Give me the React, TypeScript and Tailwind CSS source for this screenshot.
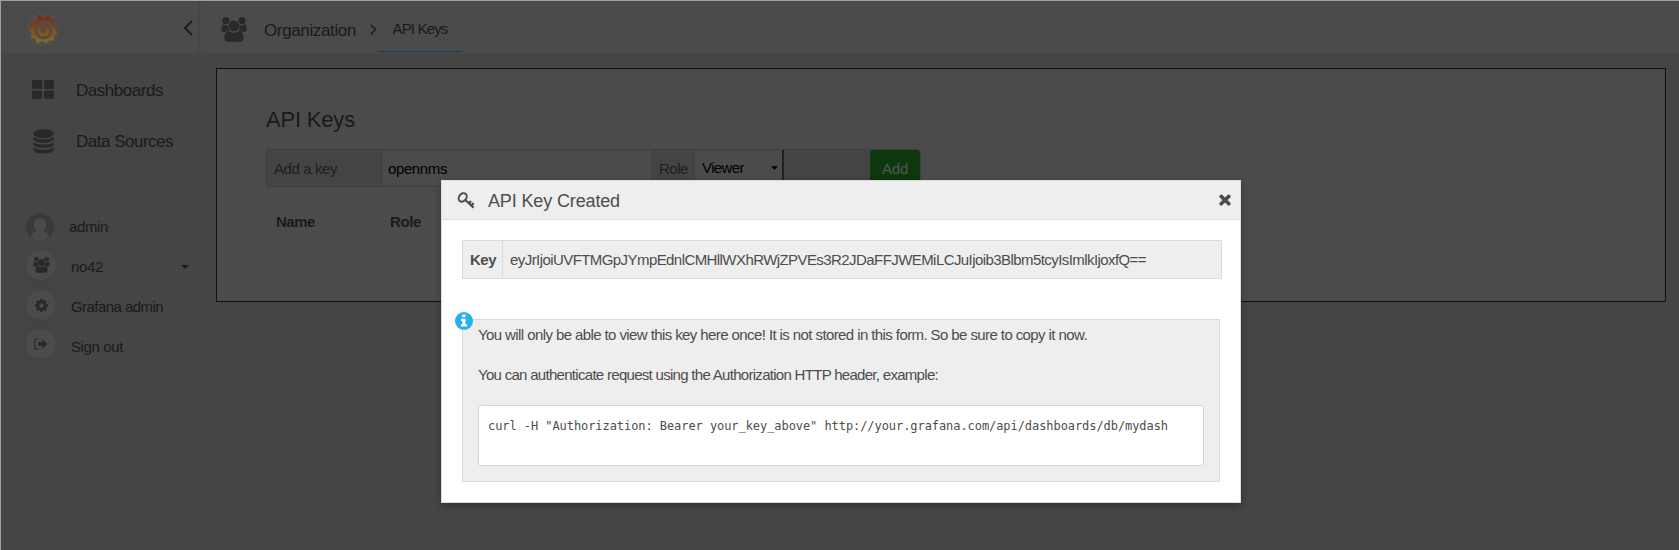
import React from "react";

type IconProps = { className?: string };

const UsersIcon = ({ className }: IconProps) => (
  <svg viewBox="0 0 26 25" className={className} fill="currentColor">
    <circle cx="4.9" cy="3.6" r="3.6" />
    <circle cx="21" cy="3.6" r="3.6" />
    <path d="M0.2 12.6C0.2 9 1.2 7.5 2.8 7.4C4.8 8.8 6.2 8.6 7.2 8.4C6.9 10.8 7.5 12 8.6 13.2C6.5 13.3 5.4 14 4.6 14.9H2.6C1 14.9 0.2 14.2 0.2 12.6ZM25.8 12.6C25.8 9 24.8 7.5 23.2 7.4C21.2 8.8 19.8 8.6 18.8 8.4C19.1 10.8 18.5 12 17.4 13.2C19.5 13.3 20.6 14 21.4 14.9H23.4C25 14.9 25.8 14.2 25.8 12.6Z" />
    <circle cx="13" cy="9" r="5.4" />
    <path d="M3.4 20.6C3.4 16.6 5 14 8.2 14C9.8 15.4 11.4 15.8 13 15.8C14.6 15.8 16.2 15.4 17.8 14C21 14 22.6 16.6 22.6 20.6C22.6 23.4 21 24.8 18.6 24.8H7.4C5 24.8 3.4 23.4 3.4 20.6Z" />
  </svg>
);

const GridIcon = () => (
  <svg viewBox="0 0 22 19" className="-mt-[2px] h-[19px] w-[22px]" fill="currentColor">
    <rect x="0" y="0" width="10.2" height="9" rx="1.6" />
    <rect x="12" y="0" width="10" height="9" rx="1.6" />
    <rect x="0" y="10.4" width="10.2" height="8.6" rx="1.6" />
    <rect x="12" y="10.4" width="10" height="8.6" rx="1.6" />
  </svg>
);

const DatabaseIcon = () => (
  <svg viewBox="0 0 21 25" className="h-[25px] w-[21px]" fill="currentColor">
    <ellipse cx="10.5" cy="4.6" rx="10.3" ry="4.4" />
    <path d="M.2 8C4.5 11.2 16.5 11.2 20.8 8V10.2C20 14.8 1 14.8 .2 10.2Z" />
    <path d="M.2 13.2C4.5 16.4 16.5 16.4 20.8 13.2V15.4C20 20 1 20 .2 15.4Z" />
    <path d="M.2 18.4C4.5 21.6 16.5 21.6 20.8 18.4V20.4C20 26 1 26 .2 20.4Z" />
  </svg>
);

const Logo = () => (
  <svg viewBox="0 0 40 40" className="mt-[4px] h-10 w-10">
    <defs>
      <linearGradient id="flame" x1="0" y1="0" x2="0" y2="1">
        <stop offset="0" stopColor="#7c2415" />
        <stop offset="0.5" stopColor="#86481c" />
        <stop offset="1" stopColor="#85701f" />
      </linearGradient>
    </defs>
    <circle cx="20" cy="20" r="19" fill="#4d4d4d" stroke="#484848" />
    <path
      fill="url(#flame)"
      d="M15.2 5.8L19.3 8.6L22.2 8.5L25.8 5.9L27.4 9.6C31.2 11.4 33.6 14.6 34.4 18.4L32.6 19.6L34.3 23.8L31 26.2L31.2 31.6L26.4 31.5L23.2 34.5L19.6 32.3L13.6 34.2L12.6 29.8L7.6 28.8L9 24.4L6 21.4L9.3 18.4L7 13.4L12 12.6L13.3 11.6Z"
    />
    <path
      fill="none"
      stroke="#4d4d4d"
      strokeWidth="2.8"
      strokeLinecap="round"
      d="M35.500 21.500C31.800 15.500 27 12.900 22 12.900C16.500 12.900 13 16.800 13 21.300C13 26 16.500 29 20.500 29C25 29 27.800 25.800 27.800 22.400C27.800 19.300 25.200 17.400 22.800 17.400C20.200 17.400 18.600 19.200 18.900 21.200C19.100 22.600 20.400 23.200 21.400 22.700"
    />
  </svg>
);

const ChevronIcon = ({ className }: IconProps) => (
  <svg viewBox="0 0 10 16" className={className} fill="none" stroke="currentColor" strokeWidth="2">
    <path d="M9 1L2 8L9 15" />
  </svg>
);

const KeyIcon = () => (
  <svg viewBox="0 0 18 17" className="h-[17px] w-[18px]" fill="none" stroke="currentColor">
    <ellipse cx="5.7" cy="5.4" rx="3.6" ry="4.6" transform="rotate(40 5.7 5.4)" strokeWidth="2" />
    <path d="M8.6 8.2L16.6 15.6M11.9 11.400L14 9M14.200 13.600L16.600 11" strokeWidth="2.2" />
  </svg>
);

const CloseIcon = () => (
  <svg viewBox="0 0 12 12" className="h-3 w-3" stroke="currentColor" strokeWidth="3.6" strokeLinecap="round">
    <path d="M2.2 2.4L9.8 9.8M9.8 2.4L2.2 9.8" />
  </svg>
);

const GearIcon = () => (
  <svg viewBox="0 0 1536 1536" className="h-[13px] w-[13px]" fill="currentColor">
    <path d="M1024 768q0-106-75-181t-181-75-181 75-75 181 75 181 181 75 181-75 75-181zm512-109v222q0 12-8 23t-20 13l-185 28q-19 54-39 91 35 50 107 138 10 12 10 25t-9 23q-27 37-99 108t-94 71q-12 0-26-9l-138-108q-44 23-91 38-16 136-29 186-7 28-36 28H657q-14 0-24.500-8.500T621 1506l-28-184q-49-16-90-37l-141 107q-10 9-25 9-14 0-25-11-126-114-165-168-7-10-7-23 0-12 8-23 15-21 51-66.500t54-70.500q-27-50-41-99L29 913q-13-2-21-12.500T0 877V655q0-12 8-23t19-13l186-28q14-46 39-92-40-57-107-138-10-12-10-24 0-10 9-23 26-36 98.500-107.500T337 135q13 0 26 10l138 107q44-23 91-38 16-136 29-186 7-28 36-28h222q14 0 24.500 8.500T915 30l28 184q49 16 90 37l142-107q9-9 24-9 13 0 25 10 129 119 165 170 7 8 7 22 0 12-8 23-15 21-51 66.500t-54 70.500q26 50 41 98l183 28q13 2 21 12.500t8 23.500z" />
  </svg>
);

const SignOutIcon = () => (
  <svg viewBox="0 0 14 12" className="h-3 w-[14px]" fill="none">
    <path d="M5 1H2.700Q.8 1 .8 3V9Q.8 11 2.700 11H5" stroke="currentColor" strokeWidth="1.100" />
    <path d="M4.300 4H8.300V1L13.600 6L8.300 11V8H4.300Z" fill="currentColor" />
  </svg>
);

const InfoIcon = () => (
  <svg viewBox="0 0 18 18" className="h-[18px] w-[18px]">
    <circle cx="9" cy="9" r="9" fill="#29b2e8" />
    <path fill="#fff" d="M7.300 2.600H10.500V5.200H7.300ZM6 6.700H10.500V12.300H12V14.400H6V12.300H7.400V8.700H6Z" />
  </svg>
);

const Avatar = () => (
  <svg viewBox="0 0 28 28" className="h-7 w-7">
    <clipPath id="round">
      <circle cx="14" cy="14" r="14" />
    </clipPath>
    <g clipPath="url(#round)">
      <rect width="28" height="28" fill="#3a3a3a" />
      <ellipse cx="14" cy="11.500" rx="6.300" ry="6.700" fill="#4a4a4a" />
      <ellipse cx="14" cy="25" rx="9.300" ry="7.700" fill="#4a4a4a" />
    </g>
  </svg>
);

const Disc = ({ children }: { children: React.ReactNode }) => (
  <span className="flex h-[30px] w-[30px] items-center justify-center rounded-full bg-[#4b4b4b] text-[#292929] shadow-[0_0_14px_2px_rgba(0,0,0,0.030)]">
    {children}
  </span>
);

const Caret = ({ className }: IconProps) => (
  <svg viewBox="0 0 8 4" className={className} fill="currentColor">
    <path d="M0 0H8L4 4Z" />
  </svg>
);

/** Text run set to a fixed advance width. */
const Fit = ({ w, children, className = "" }: { w: number; children: string; className?: string }) => {
  const ref = React.useRef<HTMLSpanElement>(null);
  const [spacing, setSpacing] = React.useState(0);
  React.useLayoutEffect(() => {
    if (ref.current) setSpacing((w - ref.current.getBoundingClientRect().width) / children.length);
  }, [w, children]);
  return (
    <span ref={ref} className={"inline-block whitespace-nowrap " + className} style={{ letterSpacing: spacing }}>
      {children}
    </span>
  );
};

const Sidebar = () => (
  <aside className="flex w-[197px] shrink-0 flex-col text-[#1a1a1a]">
    <div className="flex h-[52px] items-center justify-between bg-[#4b4b4b] pr-[5px] pl-[22px]">
      <Logo />
      <ChevronIcon className="mt-[2px] h-4 w-[10px] text-[#1c1c1c]" />
    </div>
    <nav className="flex flex-col pt-[12px] text-[17px]">
      <div className="flex h-[51px] items-center pl-[31px]">
        <span className="flex w-[44px] text-[#292929]"><GridIcon /></span>
        <Fit w={87}>Dashboards</Fit>
      </div>
      <div className="flex h-[51px] items-center pl-[32px]">
        <span className="flex w-[43px] text-[#292929]"><DatabaseIcon /></span>
        <Fit w={97}>Data Sources</Fit>
      </div>
    </nav>
    <div className="flex flex-col pt-[40px] text-[15px]">
      <div className="flex h-[40px] items-center pl-[25px]">
        <span className="w-[43px]"><Avatar /></span>
        <Fit w={39}>admin</Fit>
      </div>
      <div className="flex h-[40px] items-center pr-[9px] pl-[25px]">
        <span className="-mt-[4px] w-[45px]"><Disc><UsersIcon className="h-4 w-[17px]" /></Disc></span>
        <Fit w={32}>no42</Fit>
        <Caret className="ml-auto h-1 w-2" />
      </div>
      <div className="flex h-[40px] items-center pl-[25px]">
        <span className="-mt-[4px] w-[45px]"><Disc><GearIcon /></Disc></span>
        <Fit w={92}>Grafana admin</Fit>
      </div>
      <div className="flex h-[40px] items-center pl-[25px]">
        <span className="-mt-[6px] w-[45px]"><Disc><SignOutIcon /></Disc></span>
        <Fit w={52}>Sign out</Fit>
      </div>
    </div>
  </aside>
);

const Topbar = () => (
  <header className="flex h-[52px] shrink-0 items-center border-l-2 border-[#484848] bg-[#4b4b4b] pl-[20px] text-[#1a1a1a]">
    <UsersIcon className="mt-[5px] h-[25px] w-[26px] text-[#292929]" />
    <Fit w={92} className="ml-[17px] pt-[7px] text-[17px]">Organization</Fit>
    <ChevronIcon className="mt-[4px] ml-[14px] h-[11px] w-[7px] rotate-180" />
    <div className="ml-px flex h-[51px] w-[84px] items-center justify-center self-start border-b border-[#124257] pt-[6px] text-[15px]">
      <Fit w={55}>API Keys</Fit>
    </div>
  </header>
);

const KeysPanel = () => (
  <section className="mt-[15px] mr-[13px] ml-[16px] h-[234px] border border-[#101010] bg-[#4b4b4b] pt-[34px] pl-[49px] text-[#1a1a1a]">
    <h1 className="h-[46px] text-[22px] leading-[34px]"><Fit w={89}>API Keys</Fit></h1>
    <div className="flex h-[38px] w-[655px] border border-[#404040] bg-[#444444] text-[15px] leading-[38px]">
      <div className="w-[115px] border-r border-[#404040] pl-[7px] text-[#1e1e1e]"><Fit w={63}>Add a key</Fit></div>
      <div className="w-[270px] border-r border-[#404040] bg-[#4b4b4b] pl-[6px] text-black"><Fit w={59}>opennms</Fit></div>
      <div className="w-[43px] border-r border-[#404040] pl-[7px] text-[#1e1e1e]"><Fit w={29}>Role</Fit></div>
      <div className="flex w-[89px] items-center border-r-2 border-[#222222] bg-[#4b4b4b] pr-[4px] pl-[7px] text-black">
        <Fit w={42}>Viewer</Fit>
        <Caret className="ml-auto h-1 w-[7px]" />
      </div>
      <button className="ml-auto flex h-[36px] w-[50px] items-center justify-center rounded-[3px] bg-[#0d380e] pt-[2px] text-[15px] text-[#555555]">
        <Fit w={26}>Add</Fit>
      </button>
    </div>
    <div className="flex pt-[22px] pl-[10px] text-[15px] leading-[26px] font-bold">
      <span className="w-[114px]"><Fit w={39}>Name</Fit></span>
      <Fit w={31}>Role</Fit>
    </div>
  </section>
);

const KeyModal = () => (
  <div className="absolute top-[179px] left-[440px] flex h-[323px] w-[800px] flex-col border border-[#dddddd] bg-white text-[#4d4d4d] shadow-[0_3px_7px_rgba(0,0,0,0.3)]">
    <div className="flex h-[39px] shrink-0 items-center border-b border-[#dddddd] bg-[#eeeeee] pr-[9px] pl-[15px]">
      <KeyIcon />
      <Fit w={132} className="ml-[13px] pt-[2px] text-[18px]">API Key Created</Fit>
      <span className="ml-auto"><CloseIcon /></span>
    </div>
    <div className="mt-[20px] ml-[20px] flex h-[39px] w-[760px] items-center border border-[#dadada] bg-[#eeeeee] text-[15px]">
      <span className="flex h-full w-[40px] items-center border-r border-[#dadada] pt-px pl-[7px] font-bold"><Fit w={26}>Key</Fit></span>
      <span className="pt-px pl-[7px]"><Fit w={636}>eyJrIjoiUVFTMGpJYmpEdnlCMHllWXhRWjZPVEs3R2JDaFFJWEMiLCJuIjoib3Blbm5tcyIsImlkIjoxfQ==</Fit></span>
    </div>
    <div className="relative mt-[40px] ml-[20px] flex h-[163px] w-[758px] flex-col border border-[#dadada] bg-[#eeeeee] px-[15px] text-[15px]">
      <span className="absolute -top-[8px] -left-[8px]"><InfoIcon /></span>
      <p className="mt-[5px] h-5 leading-5"><Fit w={609}>You will only be able to view this key here once! It is not stored in this form. So be sure to copy it now.</Fit></p>
      <p className="mt-[20px] h-5 leading-5"><Fit w={460}>You can authenticate request using the Authorization HTTP header, example:</Fit></p>
      <pre className="mt-[20px] h-[61px] w-[726px] rounded-[3px] border border-[#d5d5d5] bg-white pt-[10px] pl-[9px] font-['DejaVu_Sans_Mono',monospace] text-[12px] leading-5"><Fit w={680}>{'curl -H "Authorization: Bearer your_key_above" http://your.grafana.com/api/dashboards/db/mydash'}</Fit></pre>
    </div>
  </div>
);

export default function App() {
  return (
    <div className="relative flex h-[550px] w-[1679px] overflow-hidden border-t border-l border-[#a0a0a0] bg-[#454545] font-['Liberation_Sans',Arial,sans-serif]">
      <Sidebar />
      <main className="flex min-w-0 grow flex-col pl-px">
        <Topbar />
        <div className="pl-px">
          <KeysPanel />
        </div>
      </main>
      <KeyModal />
    </div>
  );
}
